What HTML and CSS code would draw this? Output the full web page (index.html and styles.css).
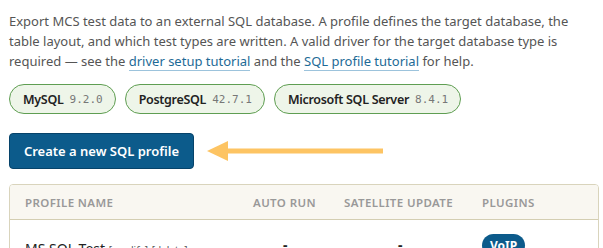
FILE: index.html
```html
<!DOCTYPE html>
<html>
<head>
  <title>SQL Export</title>
  <link rel="stylesheet" href="styles.css">
</head>
<body>

<div class="page">
  <p class="intro">
    Export MCS test data to an external SQL database. A profile defines the target database, the
    table layout, and which test types are written. A valid driver for the target database type is
    required — see the <a href="#">driver setup tutorial</a> and the <a href="#">SQL profile tutorial</a> for help.
  </p>

  <div class="drivers">
    <span class="driver">MySQL <code>9.2.0</code></span>
    <span class="driver">PostgreSQL <code>42.7.1</code></span>
    <span class="driver">Microsoft SQL Server <code>8.4.1</code></span>
  </div>

  <div class="actions">
    <button class="create">Create a new SQL profile</button>
    <!-- hint arrow -->
    <svg class="hint" width="180" height="22" viewBox="0 0 180 22">
      <polygon points="0,11 21,1 21,21" fill="#fdc463"/>
      <rect x="20" y="8.5" width="156" height="5" fill="#fdc463"/>
    </svg>
  </div>

  <div class="profiles">
    <table>
      <thead>
        <tr>
          <th class="name">Profile name</th>
          <th class="auto">Auto run</th>
          <th class="sat">Satellite update</th>
          <th class="plugins">Plugins</th>
        </tr>
      </thead>
      <tbody>
        <tr>
          <td class="name">MS SQL Test <a href="#">[modify]</a> <a href="#">[delete]</a></td>
          <td class="auto">-</td>
          <td class="sat">-</td>
          <td class="plugins"><span class="plugin">VoIP</span></td>
        </tr>
      </tbody>
    </table>
  </div>
</div>

</body>
</html>
```

FILE: styles.css
```css
body {
  margin: 0;
  font-family: "Noto Sans", sans-serif;
  color: #555;
  background: #fff;
  overflow: hidden;
}

.page {
  padding: 11px 4px 0 9px;
}

.intro {
  margin: 0;
  font-size: 13px;
  line-height: 20px;
  width: 590px;
}

.intro a {
  color: #1d6a96;
  text-decoration: none;
  border-bottom: 1px solid #9cc3dc;
}

.drivers {
  display: flex;
  gap: 9px;
  margin-top: 13px;
}

.driver {
  display: inline-flex;
  align-items: center;
  gap: 6px;
  height: 30px;
  box-sizing: border-box;
  padding: 0 12px 0 13px;
  border: 1px solid #5f9e52;
  border-radius: 15px;
  background: #eef5e9;
  color: #222;
  font-size: 12.5px;
  font-weight: 600;
  letter-spacing: -0.3px;
}

.driver code {
  font-family: "DejaVu Sans Mono", monospace;
  font-size: 11px;
  font-weight: normal;
  letter-spacing: 0;
  color: #777;
}

.actions {
  display: flex;
  align-items: center;
  gap: 13px;
  margin-top: 19px;
}

.create {
  width: 185px;
  height: 36px;
  border: 1px solid #06436a;
  border-radius: 4px;
  background: #0c5b8b;
  color: #fff;
  font-family: inherit;
  font-size: 13px;
  font-weight: 600;
  cursor: pointer;
}

.profiles {
  margin-top: 15px;
  border: 1px solid #d9d4bc;
  border-radius: 4px;
  overflow: hidden;
}

table {
  width: 100%;
  border-collapse: collapse;
}

th {
  height: 34px;
  background: #f9f7f1;
  border-bottom: 1px solid #d4ceb2;
  color: #999;
  font-size: 11.5px;
  font-weight: 600;
  letter-spacing: 0.4px;
  text-transform: uppercase;
  text-align: left;
  padding: 0;
}

th.name, td.name {
  padding-left: 15px;
  width: 228px;
}

th.auto { width: 91px; }
th.sat { width: 138px; }

td {
  height: 52px;
  color: #222;
  font-size: 14px;
  padding: 0;
  vertical-align: top;
  padding-top: 19px;
}

td.auto { padding-left: 30px; font-weight: 700; padding-top: 15px; }
td.sat { padding-left: 54px; font-weight: 700; padding-top: 15px; }

td.name a {
  color: #555;
  font-size: 10px;
  text-decoration: none;
}

td.plugins { padding-top: 14px; }

.plugin {
  display: inline-block;
  padding: 3px 8px;
  border-radius: 12px;
  background: #0c5b8b;
  color: #fff;
  font-size: 12px;
  font-weight: 700;
}
```
